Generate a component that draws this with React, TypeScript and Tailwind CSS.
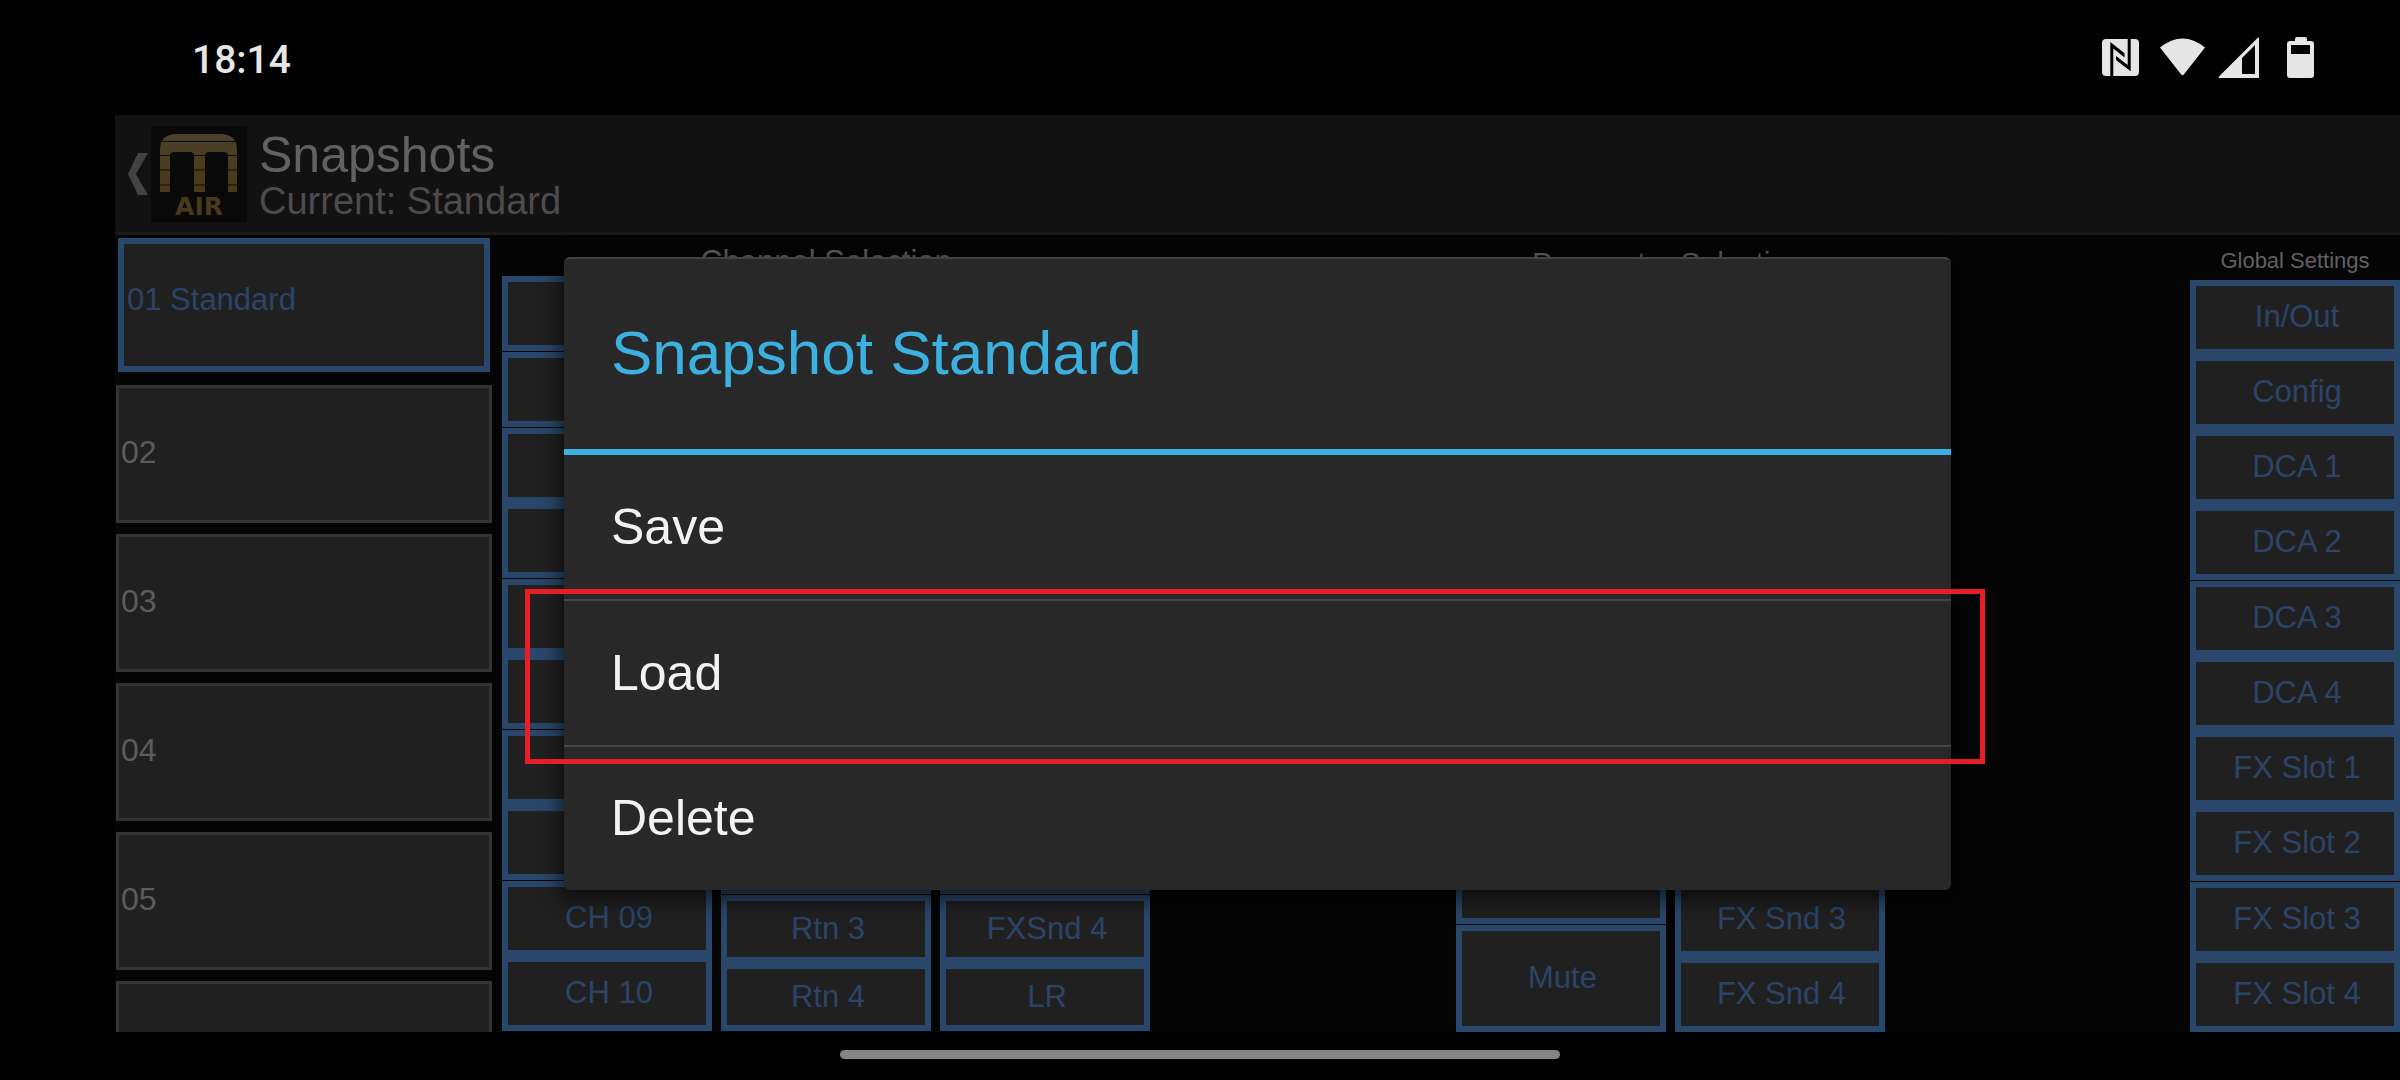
import React from 'react';

interface GroupedButtonsProps {
    groups: string[][];
    covered?: string[];
    buttonClass: string;
}

// Buttons inside a group touch each other, groups are one pixel apart
const inputGroups = [['CH 01'], ['CH 02'], ['CH 03', 'CH 04'], ['CH 05', 'CH 06'], ['CH 07', 'CH 08'], ['CH 09', 'CH 10']];
const returnGroups = [
    ['CH 11', 'CH 12'],
    ['CH 13'],
    ['CH 14'],
    ['CH 15', 'CH 16'],
    ['Line'],
    ['Rtn 1'],
    ['Rtn 2'],
    ['Rtn 3', 'Rtn 4']
];
const busGroups = [
    ['Bus 1', 'Bus 2'],
    ['Bus 3'],
    ['Bus 4'],
    ['Bus 5', 'Bus 6'],
    ['FXSnd 1'],
    ['FXSnd 2'],
    ['FXSnd 3'],
    ['FXSnd 4', 'LR']
];
const parameterGroups = [['Config', 'Gate'], ['Dyn', 'EQ'], ['Pan', 'Fader'], ['Mute']];
const sendGroups = [
    ['Bus 1', 'Bus 2', 'Bus 3', 'Bus 4'],
    ['Bus 5', 'Bus 6', 'FX Snd 1', 'FX Snd 2'],
    ['FX Snd 3', 'FX Snd 4']
];
const globalGroups = [
    ['In/Out', 'Config', 'DCA 1', 'DCA 2'],
    ['DCA 3', 'DCA 4', 'FX Slot 1', 'FX Slot 2'],
    ['FX Slot 3', 'FX Slot 4']
];

// Everything above the last group lies under the dialog and only keeps its accessible name
const coveredBy = (groups: string[][]) => groups.slice(0, -1).flat();

const GroupedButtons: React.FC<GroupedButtonsProps> = ({ groups, covered = [], buttonClass }) => (
    <div className="flex w-[210px] flex-col gap-px">
        {groups.map((group) => (
            <div key={group[0]} className="flex flex-col">
                {group.map((label) => (
                    <button
                        key={label}
                        aria-label={label}
                        className={`border-6 border-[#29476b] bg-[#202020] pb-0.5 pl-1 text-[31px] leading-none text-[#2b4468] ${buttonClass}`}
                    >
                        {!covered.includes(label) && label}
                    </button>
                ))}
            </div>
        ))}
    </div>
);

const StatusBar: React.FC = () => (
    <div className="flex h-[115px] shrink-0 items-center justify-between pr-[69px] pl-48 text-[#e6e6e6]">
        <span className="pt-1.5 font-[Roboto,sans-serif] text-[39px] leading-none font-medium">18:14</span>
        <div className="flex items-center" aria-hidden="true">
            {/* NFC */}
            <svg className="h-12 w-15" viewBox="0 0 60 48" fill="currentColor">
                <rect x="11" y="5" width="37" height="37" rx="4" />
                <path d="M19.300 43V8L33.500 19.300V23.500L22.300 14.500V43Z" fill="#000" />
                <path d="M39.700 4V37.300L25 26V22L36.700 31V4Z" fill="#000" />
            </svg>
            {/* Wi-Fi */}
            <svg className="h-12 w-15" viewBox="0 0 60 48" fill="currentColor">
                <path d="M9 13.500Q31.500 -4.500 54 13.500L33 40.300Q31.500 42 30 40.300Z" />
            </svg>
            {/* Signal */}
            <svg className="h-12 w-15" viewBox="0 0 60 48" fill="currentColor" fillRule="evenodd">
                <path d="M8 42.500L46.500 4Q48 3 48 4.500V44H9Q7 44 8 42.500ZM31 24V40H44V11Z" />
            </svg>
            {/* Battery */}
            <svg className="h-12 w-15" viewBox="0 0 60 48" fill="currentColor" fillRule="evenodd">
                <path d="M24 7V5Q24 3 26 3H34Q36 3 36 5V7H40Q43 7 43 10V41Q43 44 40 44H19Q16 44 16 41V10Q16 7 19 7ZM20 11V20H39V11Z" />
            </svg>
        </div>
    </div>
);

const AppLogo: React.FC = () => (
    <svg className="size-24 shrink-0" viewBox="0 0 96 96" role="img" aria-label="M Air">
        <defs>
            <linearGradient id="gold" x1="0" y1="0" x2="0" y2="1">
                <stop offset="0" stopColor="#4a412e" />
                <stop offset="0.5" stopColor="#4b3c1e" />
                <stop offset="1" stopColor="#493818" />
            </linearGradient>
        </defs>
        <rect width="96" height="96" fill="#090909" />
        <path
            d="M9 66V24Q9 8 26 8H69Q86 8 86 24V66H77V30Q77 26 73 26H58Q54 26 54 30V66H43V30Q43 26 39 26H23Q19 26 19 30V66Z"
            fill="url(#gold)"
        />
        <path d="M8 15.500H88M8 29.500H88M8 44H88M8 59H88" stroke="#0d0c09" strokeWidth="1" />
        <text
            x="48"
            y="89"
            textAnchor="middle"
            fill="#493a1b"
            className="font-['DejaVu_Sans',sans-serif] text-[25px] font-bold"
        >
            AIR
        </text>
    </svg>
);

const ActionBar: React.FC = () => (
    <header className="flex h-[120px] shrink-0 items-center border-b-3 border-[#1a1a1a] bg-[#121212] pl-3">
        <button className="flex items-center" aria-label="Back">
            <svg className="h-11 w-6" viewBox="0 0 24 44" fill="#424242">
                <path d="M1 22L11 1H21L9 22L21 43H11Z" />
            </svg>
            <AppLogo />
        </button>
        <div className="pl-3">
            <h1 className="text-[50px] leading-[54px] text-[#616161]">Snapshots</h1>
            <p className="text-[38px] leading-[38px] text-[#4c4c4c]">Current: Standard</p>
        </div>
    </header>
);

const SnapshotList: React.FC = () => (
    <div className="ml-px flex w-[376px] shrink-0 flex-col gap-[11px] pt-[3px]">
        <button className="mx-0.5 mb-0.5 h-[134px] shrink-0 border-6 border-[#29476b] bg-[#202020] pb-2.5 pl-[3px] text-left text-[31px] text-[#2b4468]">
            01 Standard
        </button>
        {['02', '03', '04', '05', ''].map((slot) => (
            <button
                key={slot}
                aria-label={slot || 'Next slot'}
                className="h-[138px] shrink-0 border-3 border-[#343434] bg-[#202020] pb-1 pl-0.5 text-left text-[32px] text-[#5c5c5c]"
            >
                {slot}
            </button>
        ))}
    </div>
);

const SnapshotDialog: React.FC = () => (
    <div className="absolute inset-0 flex items-center justify-center">
        <div
            role="dialog"
            aria-labelledby="dialog-title"
            className="flex w-[1387px] max-w-full flex-col rounded-md border-t-2 border-[#424242] bg-[#282828] shadow-[0_6px_20px_4px_rgba(0,0,0,0.6)]"
        >
            <h2
                id="dialog-title"
                className="flex h-[196px] items-center border-b-6 border-[#3cb1df] px-[47px] pb-1 text-[62px] text-[#3cb1df]"
            >
                Snapshot Standard
            </h2>
            <button className="h-36 px-[47px] text-left text-[50px] text-[#f3f3f3]">Save</button>
            <button className="relative box-content h-36 border-y-2 border-[#464646] px-[47px] text-left text-[50px] text-[#f3f3f3]">
                Load
                {/* Highlight around the entry */}
                <span className="pointer-events-none absolute -top-3 -right-[34px] -bottom-[19px] -left-[39px] border-5 border-[#e91d25]" />
            </button>
            <button className="h-[143px] px-[47px] text-left text-[50px] text-[#f3f3f3]">Delete</button>
        </div>
    </div>
);

export default function App() {
    return (
        <div className="flex h-screen flex-col bg-black font-['Liberation_Sans',Arial,sans-serif]">
            <StatusBar />

            <main className="relative ml-[115px] flex min-h-0 flex-1 flex-col bg-[#050505]">
                <ActionBar />

                <div className="flex min-h-0 flex-1 overflow-hidden">
                    <SnapshotList />

                    <section className="ml-2.5 shrink-0">
                        <h2 className="h-[41px] pt-3 text-center text-[31px] leading-[29px] text-[#616161]">
                            Channel Selection
                        </h2>
                        <div className="flex gap-[9px]">
                            <GroupedButtons groups={inputGroups} covered={coveredBy(inputGroups)} buttonClass="h-[75px]" />
                            <GroupedButtons groups={returnGroups} covered={coveredBy(returnGroups)} buttonClass="h-[68px]" />
                            <GroupedButtons groups={busGroups} covered={coveredBy(busGroups)} buttonClass="h-[68px]" />
                        </div>
                    </section>

                    <section className="mx-auto shrink-0">
                        <h2 className="h-[45px] pt-3 pr-1 text-center text-[30px] leading-[31px] text-[#616161]">
                            Parameter Selection
                        </h2>
                        <div className="flex gap-[9px]">
                            <GroupedButtons groups={parameterGroups} covered={coveredBy(parameterGroups)} buttonClass="h-[107px]" />
                            <GroupedButtons groups={sendGroups} covered={coveredBy(sendGroups)} buttonClass="h-[75px]" />
                        </div>
                    </section>

                    <section className="shrink-0">
                        <h2 className="h-[45px] pt-1.5 text-center text-[22px] leading-[39px] text-[#616161]">
                            Global Settings
                        </h2>
                        <GroupedButtons groups={globalGroups} buttonClass="h-[75px]" />
                    </section>
                </div>

                <SnapshotDialog />
            </main>

            {/* Gesture bar */}
            <div className="flex h-12 shrink-0 justify-center pt-[18px]">
                <div className="h-[9px] w-[720px] rounded-full bg-[#848484]" />
            </div>
        </div>
    );
}
